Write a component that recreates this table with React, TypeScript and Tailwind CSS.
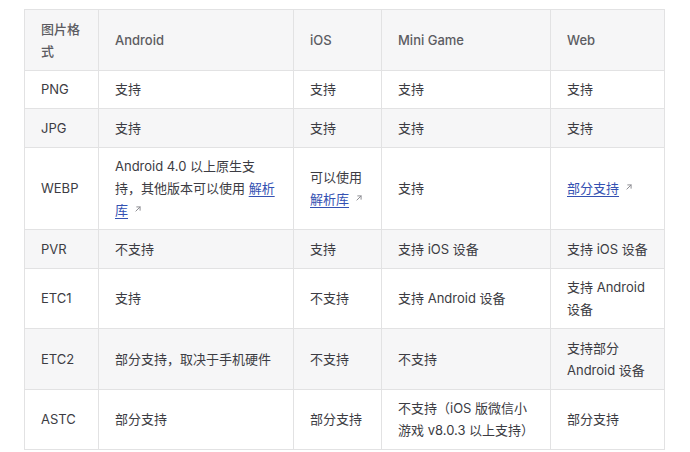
import React from "react";

type Cell = React.ReactNode;

const Arrow = () => (
  <svg viewBox="0 0 24 24" className="inline-block w-[10px] h-[10px] ml-[5px] align-[1px] text-[#8e8e93]" fill="none" stroke="currentColor" strokeWidth={2.4} strokeLinecap="round" strokeLinejoin="round">
    <path d="M7 17L17 7" />
    <path d="M9 7h8v8" />
  </svg>
);

const Link = ({ children }: { children: React.ReactNode }) => (
  <span className="whitespace-nowrap">
    <a className="text-[#3451b2] underline underline-offset-[3px] decoration-1">{children}</a>
    <Arrow />
  </span>
);

const HEAD = ["图片格式", "Android", "iOS", "Mini Game", "Web"];

const ROWS: Cell[][] = [
  ["PNG", "支持", "支持", "支持", "支持"],
  ["JPG", "支持", "支持", "支持", "支持"],
  [
    "WEBP",
    <>Android 4.0 以上原生支持，其他版本可以使用 <a className="text-[#3451b2] underline underline-offset-[3px] decoration-1">解析库</a><Arrow /></>,
    <>可以使用 <Link>解析库</Link></>,
    "支持",
    <Link>部分支持</Link>,
  ],
  ["PVR", "不支持", "支持", "支持 iOS 设备", "支持 iOS 设备"],
  ["ETC1", "支持", "不支持", "支持 Android 设备", "支持 Android 设备"],
  ["ETC2", "部分支持，取决于手机硬件", "不支持", "不支持", "支持部分 Android 设备"],
  ["ASTC", "部分支持", "部分支持", "不支持（iOS 版微信小游戏 v8.0.3 以上支持）", "部分支持"],
];

const WIDTHS = ["w-[74px]", "w-[195px]", "w-[88px]", "w-[169px]", "w-[114px]"];

export default function App() {
  return (
    <div className="w-[690px] h-[452px] bg-white pt-[9px] pl-[24px] font-['Inter','Noto_Sans_CJK_SC',sans-serif] text-[13px] leading-[22px] text-[#3c3c43]">
      <table className="table-fixed border-collapse w-[640px]">
        <colgroup>
          {WIDTHS.map((w, i) => (
            <col key={i} className={w} />
          ))}
        </colgroup>
        <thead>
          <tr className="bg-[#f6f6f7]">
            {HEAD.map((h) => (
              <th key={h} className="border border-[#e2e2e3] px-4 py-[7.75px] text-left font-medium text-[#5c5c62]">
                {h}
              </th>
            ))}
          </tr>
        </thead>
        <tbody>
          {ROWS.map((row, r) => (
            <tr key={r} className={r % 2 === 1 ? "bg-[#f6f6f7]" : "bg-white"}>
              {row.map((c, i) => (
                <td key={i} className="border border-[#e2e2e3] px-4 py-[7.75px] align-middle">
                  {c}
                </td>
              ))}
            </tr>
          ))}
        </tbody>
      </table>
    </div>
  );
}
